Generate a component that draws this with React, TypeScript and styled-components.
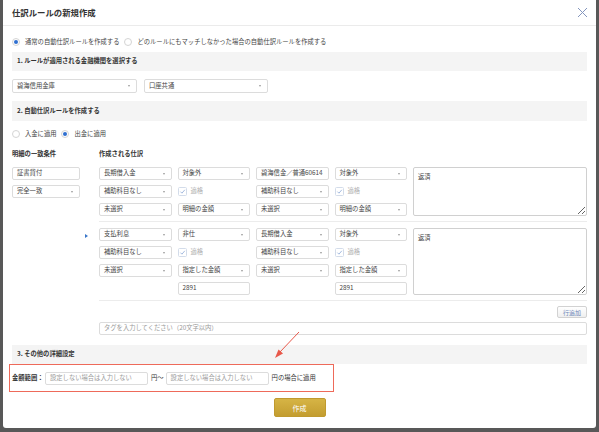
import React from 'react';
import styled, { createGlobalStyle } from 'styled-components';

const GlobalStyle = createGlobalStyle`
  html, body { margin: 0; padding: 0; background: #585858; }
  body { font-family: "Noto Sans CJK JP", "Noto Sans", sans-serif; color: #333; }
  * { box-sizing: border-box; }
`;

const Backdrop = styled.div`
  width: 599px;
  height: 432px;
  padding: 0 3px 4px 3px;
  background: #585858;
`;

const Modal = styled.div`
  position: relative;
  width: 593px;
  height: 428px;
  background: #fff;
  border-radius: 0 0 3px 3px;
  font-size: 6.3px;
  line-height: 1;
`;

const Header = styled.div`
  height: 26px;
  display: flex;
  align-items: center;
  justify-content: space-between;
  padding: 0 8px 0 9px;
  border-bottom: 1px solid #ebebeb;
`;

const Title = styled.h1`
  margin: 0;
  font-size: 8.4px;
  font-weight: 700;
  color: #333;
`;

const Body = styled.div`
  padding: 0 9px 10px;
`;

const RadioRow = styled.div<{ $top: number; $height: number }>`
  display: flex;
  align-items: center;
  gap: 5px;
  margin-top: ${p => p.$top}px;
  height: ${p => p.$height}px;
`;

const RadioItem = styled.label`
  display: flex;
  align-items: center;
  gap: 5px;
  color: #444;
`;

const RadioDot = styled.span<{ $checked?: boolean }>`
  width: 8px;
  height: 8px;
  border-radius: 50%;
  border: 1px solid #d4d4d4;
  background: #fff;
  display: flex;
  align-items: center;
  justify-content: center;
  &::after {
    content: '';
    width: 4px;
    height: 4px;
    border-radius: 50%;
    background: ${p => (p.$checked ? '#2f6fd0' : 'transparent')};
  }
`;

const Band = styled.div<{ $top: number; $height: number }>`
  margin-top: ${p => p.$top}px;
  height: ${p => p.$height}px;
  background: #f4f4f4;
  display: flex;
  align-items: center;
  padding-left: 5px;
  font-weight: 700;
  color: #333;
`;

const SelectRow = styled.div`
  display: flex;
  gap: 7px;
  margin-top: 8px;
  height: 14px;
`;

const Select = styled.div<{ $width?: number }>`
  position: relative;
  width: ${p => (p.$width ? `${p.$width}px` : '100%')};
  height: 100%;
  border: 1px solid #dcdcdc;
  border-radius: 2px;
  background: #fff;
  display: flex;
  align-items: center;
  padding: 0 10px 0 4px;
  color: #444;
  white-space: nowrap;
  overflow: hidden;
  &::after {
    content: '';
    position: absolute;
    right: 6px;
    top: 50%;
    margin-top: -1px;
    border-left: 1.5px solid transparent;
    border-right: 1.5px solid transparent;
    border-top: 2.5px solid #999;
  }
`;

const TextBox = styled.div<{ $placeholder?: boolean; $width?: number }>`
  width: ${p => (p.$width ? `${p.$width}px` : '100%')};
  height: 100%;
  border: 1px solid #dcdcdc;
  border-radius: 2px;
  background: #fff;
  display: flex;
  align-items: center;
  padding: 0 4px;
  color: ${p => (p.$placeholder ? '#9a9a9a' : '#444')};
  white-space: nowrap;
`;

const ColumnHeads = styled.div`
  display: flex;
  margin-top: 8px;
  height: 10px;
  align-items: center;
  font-weight: 700;
  color: #333;
`;

const HeadCell = styled.div<{ $width: number }>`
  width: ${p => p.$width}px;
`;

const RuleArea = styled.div`
  display: flex;
  margin-top: 8px;
`;

const MatchColumn = styled.div`
  width: 68px;
  margin-right: 19px;
  display: grid;
  grid-auto-rows: 13px;
  row-gap: 5px;
  align-content: start;
`;

const Journal = styled.div`
  flex: 1;
`;

const JournalGroup = styled.div<{ $first?: boolean }>`
  position: relative;
  display: grid;
  grid-template-columns: repeat(4, 72.5px) 1fr;
  grid-auto-rows: 13px;
  column-gap: 6px;
  row-gap: 5px;
  padding: ${p => (p.$first ? '0 0 5px' : '6px 0 5px')};
  border-bottom: 1px solid #ececec;
`;

const Marker = styled.span`
  position: absolute;
  left: -14px;
  top: 12px;
  border-top: 2.5px solid transparent;
  border-bottom: 2.5px solid transparent;
  border-left: 3.5px solid #3a76c9;
`;

const Memo = styled.textarea<{ $rows: number }>`
  grid-column: 5;
  grid-row: 1 / span ${p => p.$rows};
  width: 100%;
  height: 100%;
  margin: 0;
  border: 1px solid #d0d0d0;
  border-radius: 2px;
  padding: 4px;
  font-family: inherit;
  font-size: 6.3px;
  color: #444;
  resize: vertical;
  outline: none;
`;

const Check = styled.label`
  display: flex;
  align-items: center;
  gap: 4px;
  color: #b0b0b0;
`;

const CheckBox = styled.span`
  width: 9px;
  height: 9px;
  border: 1px solid #d3dcea;
  border-radius: 1.5px;
  display: flex;
  align-items: center;
  justify-content: center;
`;

const Toolbar = styled.div`
  display: flex;
  justify-content: flex-end;
  margin-top: 5px;
`;

const SmallButton = styled.button`
  width: 30px;
  height: 12px;
  padding: 0;
  border: 1px solid #d2d2d2;
  border-radius: 2px;
  background: linear-gradient(#fff, #efefef);
  color: #6a86b8;
  font-family: inherit;
  font-size: 6px;
`;

const TagInput = styled.div`
  margin: 4px 0 0 87px;
  height: 13px;
`;

const HighlightBox = styled.div`
  margin: 0 0 0 -3px;
  width: 325px;
  height: 28px;
  border: 1.5px solid #ee6a5a;
  display: flex;
  align-items: center;
  padding-left: 2px;
  color: #333;
`;

const RangeLabel = styled.span`
  font-weight: 700;
  width: 33px;
`;

const RangeField = styled.div`
  height: 13px;
  width: 103px;
`;

const Unit = styled.span<{ $gap: number }>`
  margin: 0 ${p => p.$gap}px 0 3px;
`;

const Footer = styled.div`
  display: flex;
  justify-content: center;
  margin-top: 6px;
`;

const PrimaryButton = styled.button`
  width: 52px;
  height: 19px;
  border: 1px solid #c09a2f;
  border-radius: 2px;
  background: linear-gradient(#d6b445, #c39d30);
  color: #fff;
  font-family: inherit;
  font-size: 7px;
  padding: 0;
`;

const Callout = styled.svg`
  position: absolute;
  left: 268px;
  top: 330px;
`;

const CheckMark = () => (
  <svg width="7" height="7" viewBox="0 0 10 10">
    <path d="M2 5.2 L4.2 7.4 L8.3 2.6" fill="none" stroke="#9cb4dc" strokeWidth="1.3" />
  </svg>
);

const Qualified = () => (
  <Check>
    <CheckBox>
      <CheckMark />
    </CheckBox>
    適格
  </Check>
);

type Cell = { kind: 'select' | 'text' | 'check' | 'empty'; label?: string };

const groups: { memo: string; rows: Cell[][] }[] = [
  {
    memo: '返済',
    rows: [
      [
        { kind: 'select', label: '長期借入金' },
        { kind: 'select', label: '対象外' },
        { kind: 'select', label: '碧海信金／普通60614' },
        { kind: 'select', label: '対象外' },
      ],
      [
        { kind: 'select', label: '補助科目なし' },
        { kind: 'check' },
        { kind: 'select', label: '補助科目なし' },
        { kind: 'check' },
      ],
      [
        { kind: 'select', label: '未選択' },
        { kind: 'select', label: '明細の金額' },
        { kind: 'select', label: '未選択' },
        { kind: 'select', label: '明細の金額' },
      ],
    ],
  },
  {
    memo: '返済',
    rows: [
      [
        { kind: 'select', label: '支払利息' },
        { kind: 'select', label: '非仕' },
        { kind: 'select', label: '長期借入金' },
        { kind: 'select', label: '対象外' },
      ],
      [
        { kind: 'select', label: '補助科目なし' },
        { kind: 'check' },
        { kind: 'select', label: '補助科目なし' },
        { kind: 'check' },
      ],
      [
        { kind: 'select', label: '未選択' },
        { kind: 'select', label: '指定した金額' },
        { kind: 'select', label: '未選択' },
        { kind: 'select', label: '指定した金額' },
      ],
      [
        { kind: 'empty' },
        { kind: 'text', label: '2891' },
        { kind: 'empty' },
        { kind: 'text', label: '2891' },
      ],
    ],
  },
];

function renderCell(cell: Cell, key: string) {
  switch (cell.kind) {
    case 'select':
      return <Select key={key}>{cell.label}</Select>;
    case 'text':
      return <TextBox key={key}>{cell.label}</TextBox>;
    case 'check':
      return <Qualified key={key} />;
    default:
      return <span key={key} />;
  }
}

export default function App() {
  return (
    <Backdrop>
      <GlobalStyle />
      <Modal>
        <Header>
          <Title>仕訳ルールの新規作成</Title>
          <svg width="11" height="11" viewBox="0 0 11 11">
            <path d="M1 1 L10 10 M10 1 L1 10" stroke="#8496bd" strokeWidth="1" />
          </svg>
        </Header>
        <Body>
          <RadioRow $top={6} $height={20}>
            <RadioItem>
              <RadioDot $checked />
              通常の自動仕訳ルールを作成する
            </RadioItem>
            <RadioItem>
              <RadioDot />
              どのルールにもマッチしなかった場合の自動仕訳ルールを作成する
            </RadioItem>
          </RadioRow>

          <Band $top={0} $height={19}>1. ルールが適用される金融機関を選択する</Band>
          <SelectRow>
            <Select $width={125}>碧海信用金庫</Select>
            <Select $width={124}>口座共通</Select>
          </SelectRow>

          <Band $top={8} $height={20}>2. 自動仕訳ルールを作成する</Band>
          <RadioRow $top={6} $height={14}>
            <RadioItem>
              <RadioDot />
              入金に適用
            </RadioItem>
            <RadioItem>
              <RadioDot $checked />
              出金に適用
            </RadioItem>
          </RadioRow>

          <ColumnHeads>
            <HeadCell $width={87}>明細の一致条件</HeadCell>
            <HeadCell $width={100}>作成される仕訳</HeadCell>
          </ColumnHeads>

          <RuleArea>
            <MatchColumn>
              <TextBox>証書貸付</TextBox>
              <Select>完全一致</Select>
            </MatchColumn>
            <Journal>
              {groups.map((g, gi) => (
                <JournalGroup key={gi} $first={gi === 0}>
                  {gi === 1 && <Marker />}
                  {g.rows.map((row, ri) => row.map((cell, ci) => renderCell(cell, `${ri}-${ci}`)))}
                  <Memo $rows={g.rows.length} readOnly defaultValue={g.memo} />
                </JournalGroup>
              ))}
              <Toolbar>
                <SmallButton>行追加</SmallButton>
              </Toolbar>
            </Journal>
          </RuleArea>
          <TagInput>
            <TextBox $placeholder>タグを入力してください（20文字以内）</TextBox>
          </TagInput>

          <Band $top={10} $height={19}>3. その他の詳細設定</Band>
          <HighlightBox>
            <RangeLabel>金額範囲：</RangeLabel>
            <RangeField>
              <TextBox $placeholder>設定しない場合は入力しない</TextBox>
            </RangeField>
            <Unit $gap={2}>円〜</Unit>
            <RangeField>
              <TextBox $placeholder>設定しない場合は入力しない</TextBox>
            </RangeField>
            <Unit $gap={0}>円の場合に適用</Unit>
          </HighlightBox>

          <Footer>
            <PrimaryButton>作成</PrimaryButton>
          </Footer>
        </Body>
        <Callout width="34" height="32" viewBox="0 0 34 32">
          <path d="M28 2 L9 22" stroke="#e8584a" strokeWidth="1" />
          <path d="M4 28 L7.5 19.5 L12 23.5 Z" fill="#e8584a" />
        </Callout>
      </Modal>
    </Backdrop>
  );
}
